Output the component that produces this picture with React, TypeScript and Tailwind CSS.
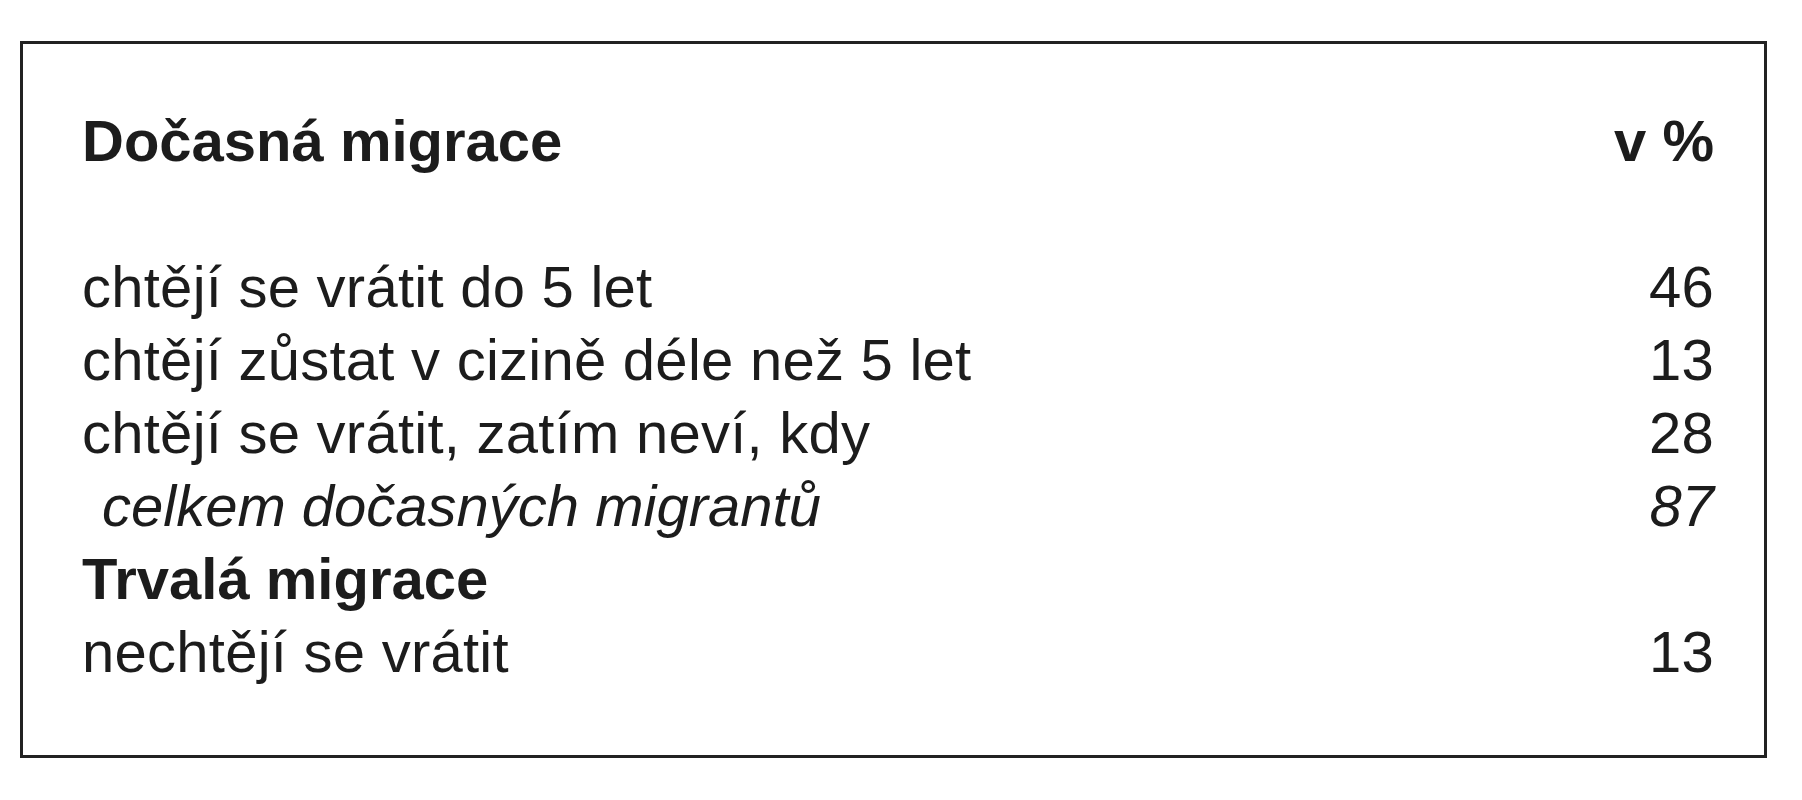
import React from 'react';

type Row = {
	label: string;
	value?: string;
	kind?: 'heading' | 'italic' | 'normal';
};

const rows: Row[] = [
	{ label: 'chtějí se vrátit do 5 let', value: '46' },
	{ label: 'chtějí zůstat v cizině déle než 5 let', value: '13' },
	{ label: 'chtějí se vrátit, zatím neví, kdy', value: '28' },
	{ label: 'celkem dočasných migrantů', value: '87', kind: 'italic' },
	{ label: 'Trvalá migrace', kind: 'heading' },
	{ label: 'nechtějí se vrátit', value: '13' },
];

export default function App() {
	return (
		<div className="min-h-screen bg-white pt-[41px] pl-[20px] font-['Liberation_Sans',Arial,sans-serif] text-[#1c1c1c]">
			<div className="w-[1747px] border-[3px] border-[#222] pt-[60px] pb-[67px] pl-[59px] pr-[50px]">
				{/* Header */}
				<div className="flex items-baseline justify-between text-[58px] leading-[73px] font-bold">
					<span>Dočasná migrace</span>
					<span>v %</span>
				</div>

				{/* Rows */}
				<div className="mt-[73px]">
					{rows.map(row => (
						<div
							key={row.label}
							className={
								'flex items-baseline justify-between text-[58px] leading-[73px] ' +
								(row.kind === 'heading' ? 'font-bold' : '') +
								(row.kind === 'italic' ? 'italic' : '') +
								(row.kind === undefined ? 'tracking-[0.25px]' : '')
							}
						>
							<span className={row.kind === 'italic' ? 'pl-[20px]' : ''}>{row.label}</span>
							{row.value && <span>{row.value}</span>}
						</div>
					))}
				</div>
			</div>
		</div>
	);
}
